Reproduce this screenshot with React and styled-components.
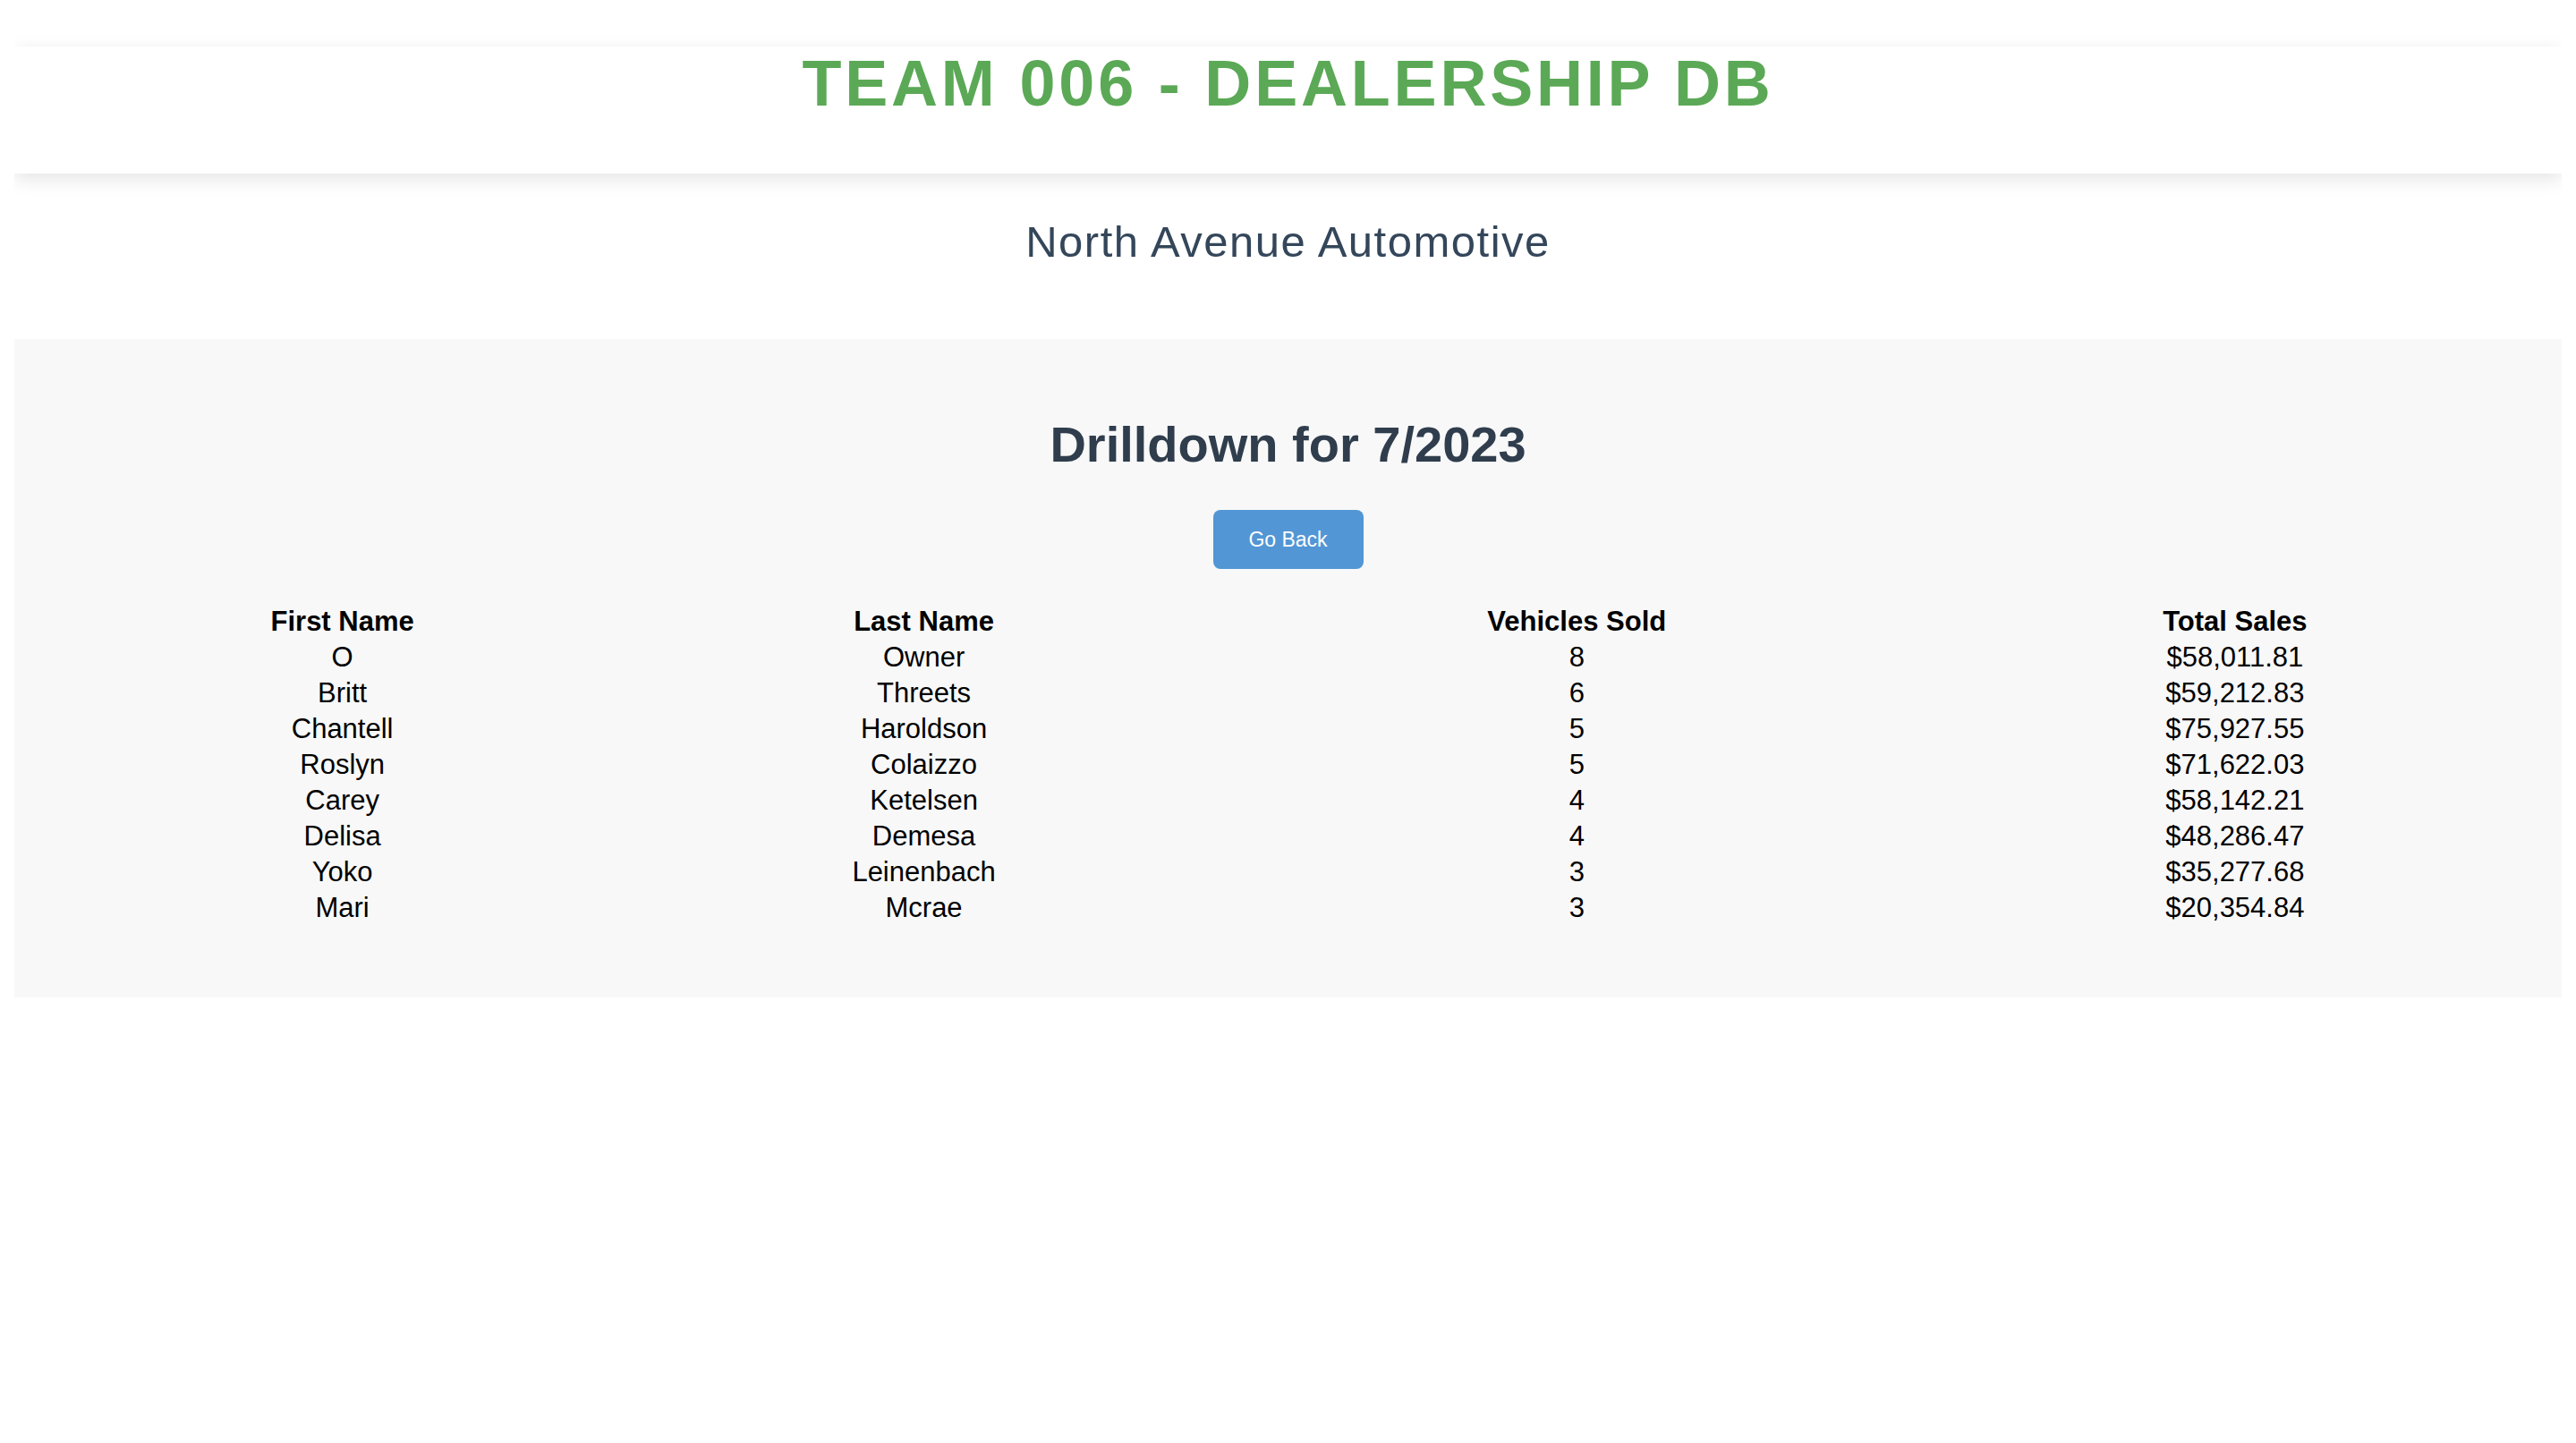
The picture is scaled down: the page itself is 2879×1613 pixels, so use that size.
import React from "react";
import styled, { createGlobalStyle } from "styled-components";

const GlobalStyle = createGlobalStyle`
  html, body {
    margin: 0;
    padding: 0;
    background: #ffffff;
  }
  body {
    margin: 16px;
    font-family: "Liberation Sans", Arial, Helvetica, sans-serif;
  }
`;

const Page = styled.div`
  display: flex;
  flex-direction: column;
`;

const Header = styled.header`
  margin-top: 36px;
  height: 142px;
  box-sizing: border-box;
  padding-top: 5px;
  background: #ffffff;
  box-shadow: 0 6px 20px rgba(0, 0, 0, 0.11);
`;

const Title = styled.h1`
  margin: 0;
  font-size: 72px;
  line-height: 72px;
  font-weight: 700;
  letter-spacing: 3.8px;
  color: #5ba956;
  text-align: center;
`;

const Subtitle = styled.h2`
  margin: 48px 0 0;
  font-size: 49px;
  line-height: 56px;
  font-weight: 400;
  letter-spacing: 1.5px;
  color: #34465a;
  text-align: center;
`;

const Panel = styled.section`
  margin-top: 81px;
  background: #f8f8f8;
  padding: 86px 38px 80px;
  display: flex;
  flex-direction: column;
  align-items: center;
`;

const PanelHeading = styled.h3`
  margin: 0;
  font-size: 56px;
  line-height: 64px;
  font-weight: 700;
  color: #2f3d4d;
  text-align: center;
`;

const BackButton = styled.button`
  margin-top: 41px;
  width: 168px;
  height: 66px;
  border: none;
  border-radius: 8px;
  background: #5296d5;
  color: #ffffff;
  font-family: "Liberation Sans", Arial, sans-serif;
  font-size: 23px;
  cursor: pointer;
`;

const Table = styled.table`
  margin-top: 39px;
  width: 100%;
  table-layout: fixed;
  border-collapse: collapse;
  color: #000000;
  font-size: 31px;
  line-height: 40px;
`;

const HeadCell = styled.th`
  padding: 0;
  font-weight: 700;
  text-align: center;
`;

const Cell = styled.td`
  padding: 0;
  text-align: center;
`;

const rows = [
  ["O", "Owner", 8, "$58,011.81"],
  ["Britt", "Threets", 6, "$59,212.83"],
  ["Chantell", "Haroldson", 5, "$75,927.55"],
  ["Roslyn", "Colaizzo", 5, "$71,622.03"],
  ["Carey", "Ketelsen", 4, "$58,142.21"],
  ["Delisa", "Demesa", 4, "$48,286.47"],
  ["Yoko", "Leinenbach", 3, "$35,277.68"],
  ["Mari", "Mcrae", 3, "$20,354.84"],
];

const columns = [
  { label: "First Name", width: "23.72%" },
  { label: "Last Name", width: "23.19%" },
  { label: "Vehicles Sold", width: "29.48%" },
  { label: "Total Sales", width: "23.61%" },
];

export default function App() {
  return (
    <>
      <GlobalStyle />
      <Page>
        <Header>
          <Title>TEAM 006 - DEALERSHIP DB</Title>
        </Header>
        <Subtitle>North Avenue Automotive</Subtitle>
        <Panel>
          <PanelHeading>Drilldown for 7/2023</PanelHeading>
          <BackButton type="button">Go Back</BackButton>
          <Table>
            <colgroup>
              {columns.map((c) => (
                <col key={c.label} style={{ width: c.width }} />
              ))}
            </colgroup>
            <thead>
              <tr>
                {columns.map((c) => (
                  <HeadCell key={c.label}>{c.label}</HeadCell>
                ))}
              </tr>
            </thead>
            <tbody>
              {rows.map((r) => (
                <tr key={r[0] + r[1]}>
                  {r.map((v, i) => (
                    <Cell key={i}>{v}</Cell>
                  ))}
                </tr>
              ))}
            </tbody>
          </Table>
        </Panel>
      </Page>
    </>
  );
}
